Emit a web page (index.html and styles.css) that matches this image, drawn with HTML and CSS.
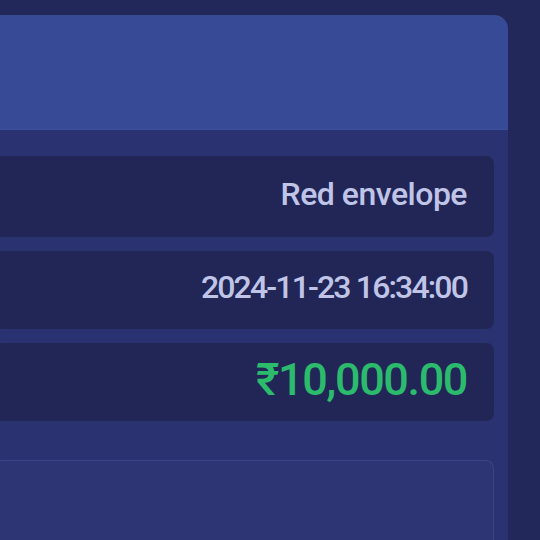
FILE: index.html
```html
<!DOCTYPE html>
<html lang="en">

<head>
    <meta charset="UTF-8">
    <meta name="viewport" content="width=device-width, initial-scale=1.0">
    <title>Record Detail</title>
    <link rel="stylesheet" href="styles.css">
</head>

<body>
    <div class="page">
        <div class="card">
            <div class="card-header"></div>
            <div class="card-body">
                <div class="row">
                    <span class="value">Red envelope</span>
                </div>
                <div class="row">
                    <span class="value date">2024-11-23 16:34:00</span>
                </div>
                <div class="row">
                    <span class="value amount">₹10,000.00</span>
                </div>
                <div class="note-box"></div>
            </div>
        </div>
    </div>
</body>

</html>
```

FILE: styles.css
```css
body {
    margin: 0;
    padding: 0;
    background-color: #22285a;
    font-family: Roboto, "Noto Sans", sans-serif;
}

.page {
    padding-top: 15px;
}

.card {
    margin-left: -20px;
    width: 528px;
    border-radius: 14px 14px 0 0;
    overflow: hidden;
    background-color: #2b3272;
}

.card-header {
    height: 114px;
    background-color: #374a96;
    border-bottom: 1px solid #3e4f9a;
}

.card-body {
    padding: 26px 14px 0 14px;
    display: flex;
    flex-direction: column;
    gap: 14px;
}

.row {
    height: 78px;
    box-sizing: border-box;
    padding: 0 27px 6px 0;
    display: flex;
    align-items: center;
    justify-content: flex-end;
    background-color: #212657;
    border-radius: 8px;
}

.row:first-child {
    height: 81px;
}

.value {
    color: #c0c5e8;
    font-size: 32px;
    font-weight: 500;
    letter-spacing: -0.5px;
}

.date {
    letter-spacing: -1.85px;
}

.amount {
    color: #2cbb6d;
    font-size: 45px;
    letter-spacing: -1.4px;
}

.note-box {
    margin-top: 25px;
    height: 79px;
    background-color: #2d3575;
    border: 1px solid #3a4488;
    border-bottom: 0;
    border-radius: 8px 8px 0 0;
}
```
